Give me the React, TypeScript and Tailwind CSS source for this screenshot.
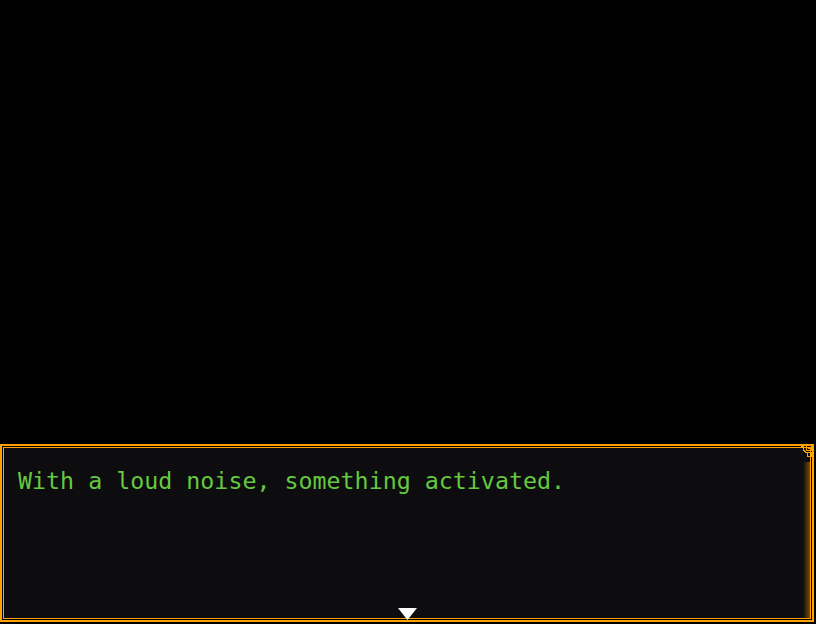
import React from "react";

export default function App() {
  return (
    <div className="w-[816px] h-[624px] bg-black flex flex-col overflow-hidden">
      <div className="h-[444px] shrink-0" />
      <div className="w-[814px] h-[178px] border-2 border-[#ffa200] bg-black p-px shrink-0">
        <div className="relative h-full border border-[#ffa200] bg-[#0d0d10]">
          <div
            className="pl-[14px] pt-[19px] text-[23.3px] leading-[28px] text-[#66c83e]"
            style={{ fontFamily: '"DejaVu Sans Mono", monospace' }}
          >
            With a loud noise, something activated.
          </div>
          <div className="absolute right-0 top-[14px] bottom-0 w-[7px] bg-gradient-to-l from-[#7a4e00] to-transparent" />
          <svg
            className="absolute -right-[3px] -top-[4px]"
            width="16"
            height="18"
            viewBox="0 0 16 18"
            fill="none"
            stroke="#ffa200"
            strokeWidth="1"
            shapeRendering="crispEdges"
          >
            <path d="M0.5 1.5 H4.5 V2.5 H5.5 V3.5 H6.5 V6.5 H7.5 V7.5 H8.5 V8.5 H10.5" />
            <path d="M3.5 1.5 V0.5 M4.5 0.5 H6.5 V2.5 H4.5" />
            <rect x="9.5" y="1.5" width="5" height="5" />
            <rect x="11.5" y="3.5" width="1" height="1" />
            <rect x="10.5" y="8.5" width="4" height="4" />
          </svg>
          <svg
            className="absolute left-[394px] bottom-[-2px]"
            width="19"
            height="12"
            viewBox="0 0 19 12"
          >
            <polygon points="0,0 19,0 9.5,12" fill="#ffffff" />
          </svg>
        </div>
      </div>
    </div>
  );
}
